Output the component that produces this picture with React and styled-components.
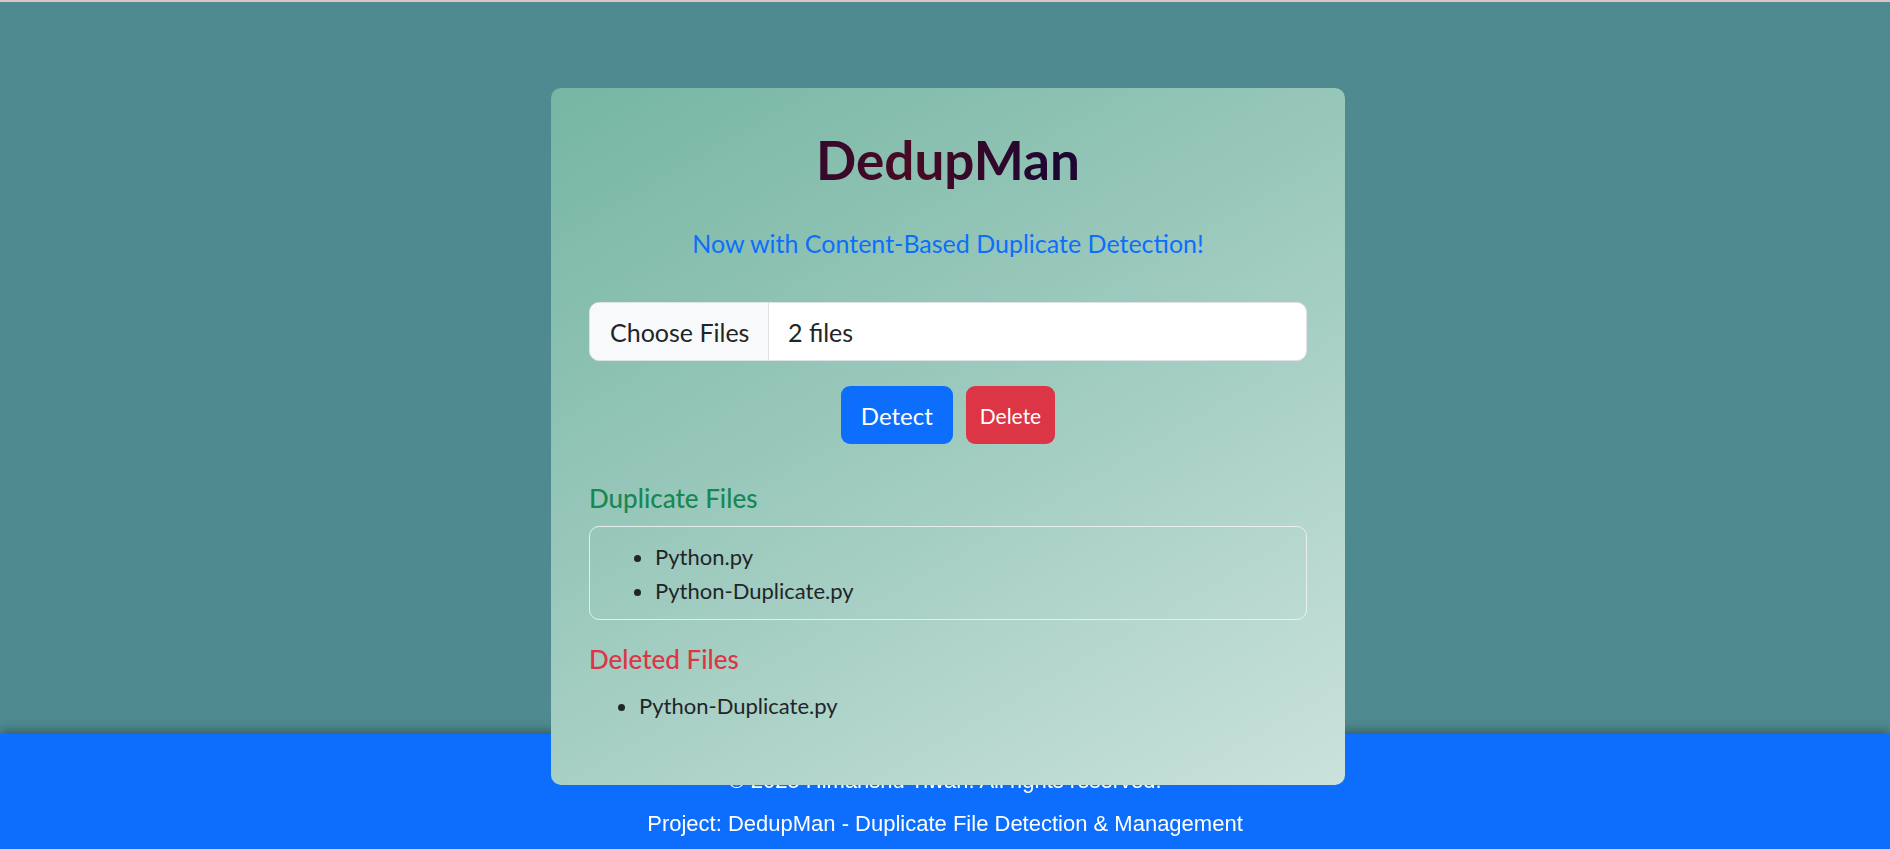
import styled, { createGlobalStyle } from 'styled-components';

const GlobalStyle = createGlobalStyle`
  html, body {
    margin: 0;
    padding: 0;
  }
  body {
    background: #4f8a91;
    font-family: Lato, "Noto Sans", sans-serif;
    color: #212529;
    min-height: 849px;
  }
  * { box-sizing: border-box; }
`

const TopEdge = styled.div`
  height: 2px;
  background: #dcc6c6;
`

const Main = styled.main`
  display: flex;
  justify-content: center;
  padding-top: 86px;
  position: relative;
  z-index: 2;
`

const Card = styled.section`
  width: 794px;
  margin-left: 6px;
  padding: 40px 38px 64px;
  border-radius: 10px;
  background: linear-gradient(150deg, #76b6a3 0%, #9fcbbf 50%, #cae2dc 100%);
`

const Title = styled.h1`
  margin: 0 0 33px;
  text-align: center;
  font-size: 53px;
  line-height: 1.2;
  font-weight: 700;
  background: linear-gradient(90deg, #4d0b22 0%, #2a0830 25%, #4a0a24 45%, #1c0632 65%, #4a0a22 100%);
  -webkit-background-clip: text;
  background-clip: text;
  color: transparent;
`

const Lead = styled.p`
  margin: 0 0 40px;
  text-align: center;
  color: #0d6efd;
  font-size: 25px;
  line-height: 1.5;
`

const FileInput = styled.div`
  display: flex;
  height: 59px;
  border: 1px solid #dee2e6;
  border-radius: 10px;
  overflow: hidden;
  background: #fff;
  font-size: 25px;
`

const ChooseBtn = styled.span`
  display: flex;
  align-items: center;
  flex: 0 0 179px;
  padding: 0 18px 0 20px;
  white-space: nowrap;
  background: #f8f9fa;
  border-right: 1px solid #dee2e6;
  color: #212529;
`

const FileCount = styled.span`
  display: flex;
  align-items: center;
  padding-left: 19px;
  color: #212529;
`

const Actions = styled.div`
  display: flex;
  justify-content: center;
  gap: 13px;
  margin: 25px 0 39px;
`

const Button = styled.button`
  height: 58px;
  padding: 0 ${p => p.$small ? 14 : 20}px;
  border: none;
  border-radius: 9px;
  background: ${p => p.$variant === 'danger' ? '#dc3545' : '#0d6efd'};
  color: #fff;
  font-family: inherit;
  font-size: ${p => p.$small ? 21 : 24}px;
  cursor: pointer;
`

const SectionTitle = styled.h5`
  margin: 0 0 12px;
  font-size: 26px;
  line-height: 1.2;
  font-weight: 500;
  color: ${p => p.$tone === 'danger' ? '#dc3545' : '#198754'};
`

const ListBox = styled.div`
  border: 1px solid rgba(240, 244, 244, 0.85);
  border-radius: 10px;
  padding: 15px 15px 13px;
  margin-bottom: 24px;
`

const FileList = styled.ul`
  margin: ${p => p.$loose ? '16px' : '0'} 0 0;
  padding-left: 50px;
  font-size: 22px;
  line-height: 30px;

  li + li { margin-top: 4px; }
`

const Footer = styled.footer`
  position: fixed;
  left: 0;
  right: 0;
  bottom: 0;
  height: 115px;
  z-index: 1;
  background: #0d6efd;
  box-shadow: 0 -3px 10px rgba(0, 0, 0, 0.35);
  color: #fff;
  text-align: center;
  font-family: "Liberation Sans", Arial, sans-serif;
  font-size: 22px;
  padding-top: 34px;

  p {
    margin: 0 0 18px;
    line-height: 25px;
  }
`

export default function App() {
  return (
    <>
      <GlobalStyle />
      <TopEdge />
      <Main>
        <Card>
          <Title>DedupMan</Title>
          <Lead>Now with Content-Based Duplicate Detection!</Lead>
          <FileInput>
            <ChooseBtn>Choose Files</ChooseBtn>
            <FileCount>2 files</FileCount>
          </FileInput>
          <Actions>
            <Button>Detect</Button>
            <Button $variant="danger" $small>Delete</Button>
          </Actions>
          <SectionTitle>Duplicate Files</SectionTitle>
          <ListBox>
            <FileList>
              <li>Python.py</li>
              <li>Python-Duplicate.py</li>
            </FileList>
          </ListBox>
          <SectionTitle $tone="danger">Deleted Files</SectionTitle>
          <FileList $loose>
            <li>Python-Duplicate.py</li>
          </FileList>
        </Card>
      </Main>
      <Footer>
        <p>© 2025 Himanshu Tiwari. All rights reserved.</p>
        <p>Project: DedupMan - Duplicate File Detection &amp; Management</p>
      </Footer>
    </>
  )
}
